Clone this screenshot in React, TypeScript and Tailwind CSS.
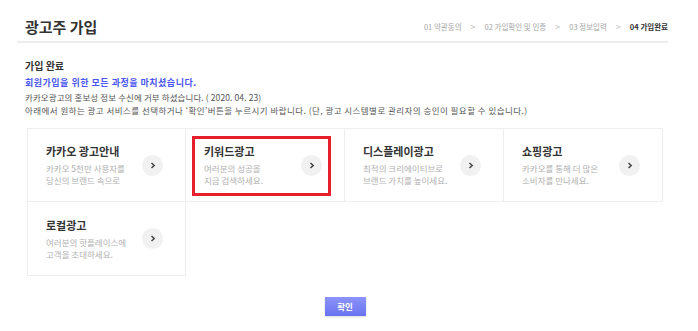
const font = { fontFamily: '"Noto Sans CJK KR", "Noto Sans", sans-serif' };

const steps = ['01 약관동의', '02 가입확인 및 인증', '03 정보입력'];

const cards = [
  { title: '카카오 광고안내', desc: ['카카오 5천만 사용자를', '당신의 브랜드 속으로'] },
  { title: '키워드광고', desc: ['여러분의 성공을', '지금 검색하세요.'], selected: true },
  { title: '디스플레이광고', desc: ['최적의 크리에이티브로', '브랜드 가치를 높이세요.'] },
  { title: '쇼핑광고', desc: ['카카오를 통해 더 많은', '소비자를 만나세요.'] },
  { title: '로컬광고', desc: ['여러분의 핫플레이스에', '고객을 초대하세요.'] },
];

const Card = ({ title, desc, selected, first, top }: { title: string; desc: string[]; selected?: boolean; first: boolean; top: boolean }) => (
  <div
    className={`relative h-[74px] border-r border-b border-[#eeeeee] bg-white flex items-center justify-between pl-[18px] pr-[22px] ${
      first ? 'border-l' : ''
    } ${top ? 'border-t' : ''}`}
  >
    {selected && (
      <div className="absolute left-[6px] top-[7px] w-[139px] h-[60px] border-[3px] border-[#e5202a]" />
    )}
    <div>
      <p className="text-[11px] leading-[14px] font-bold text-[#333]">{title}</p>
      <div className="mt-[4px] text-[8.5px] leading-[12px] text-[#b0b0b0]">
        {desc.map((d) => (
          <p key={d}>{d}</p>
        ))}
      </div>
    </div>
    <div className="w-[21px] h-[21px] shrink-0 rounded-full bg-[#f1f1f1] flex items-center justify-center">
      <svg width="6" height="7" viewBox="0 0 6 7">
        <path d="M1.5 1 L4.2 3.5 L1.5 6" fill="none" stroke="#444" strokeWidth="1.5" />
      </svg>
    </div>
  </div>
);

export default function App() {
  return (
    <div className="w-[698px] h-[331px] bg-white overflow-hidden" style={font}>
      <div className="ml-[17px] w-[651px]">
        <header className="flex items-end justify-between pt-[17px] pb-[4px] border-b-2 border-[#ededed]">
          <h1 className="pl-[8px] text-[15px] leading-[20px] font-bold text-[#333]">광고주 가입</h1>
          <div className="flex items-center gap-[9px] pb-[4px] text-[7.5px] text-[#a5a5a5]">
            {steps.map((s) => (
              <span key={s} className="flex items-center gap-[9px]">
                {s}
                <span className="text-[9px] text-[#bbb]">&gt;</span>
              </span>
            ))}
            <span className="font-bold text-[#333]">04 가입완료</span>
          </div>
        </header>

        <section className="pl-[8px] pt-[16px]">
          <h2 className="text-[10px] leading-[14px] font-bold text-[#333]">가입 완료</h2>
          <p className="mt-[3px] text-[9px] leading-[14px] font-bold tracking-[0.5px] text-[#4b57f2]">
            회원가입을 위한 모든 과정을 마치셨습니다.
          </p>
          <p className="mt-[1px] text-[8.5px] leading-[13px] tracking-[0.1px] text-[#555]">
            카카오광고의 홍보성 정보 수신에 거부 하셨습니다. ( 2020. 04. 23)
          </p>
          <p className="text-[8.5px] leading-[13px] tracking-[0.45px] text-[#555] whitespace-nowrap">
            아래에서 원하는 광고 서비스를 선택하거나 ‘확인’버튼을 누르시기 바랍니다. (단, 광고 시스템별로 관리자의 승인이 필요할 수 있습니다.)
          </p>
        </section>

        <div className="ml-[10px] mt-[11px] grid grid-cols-[repeat(4,159px)]">
          {cards.map((c, i) => (
            <Card key={c.title} {...c} first={i % 4 === 0} top={i < 4} />
          ))}
        </div>

        <div className="ml-[10px] w-[636px] flex justify-center mt-[21px]">
          <button className="w-[41px] h-[19px] bg-gradient-to-b from-[#8c93fa] to-[#6a73ef] text-white text-[8.5px] font-bold shadow-[0_1px_2px_rgba(0,0,0,0.15)]">
            확인
          </button>
        </div>
      </div>
    </div>
  );
}
